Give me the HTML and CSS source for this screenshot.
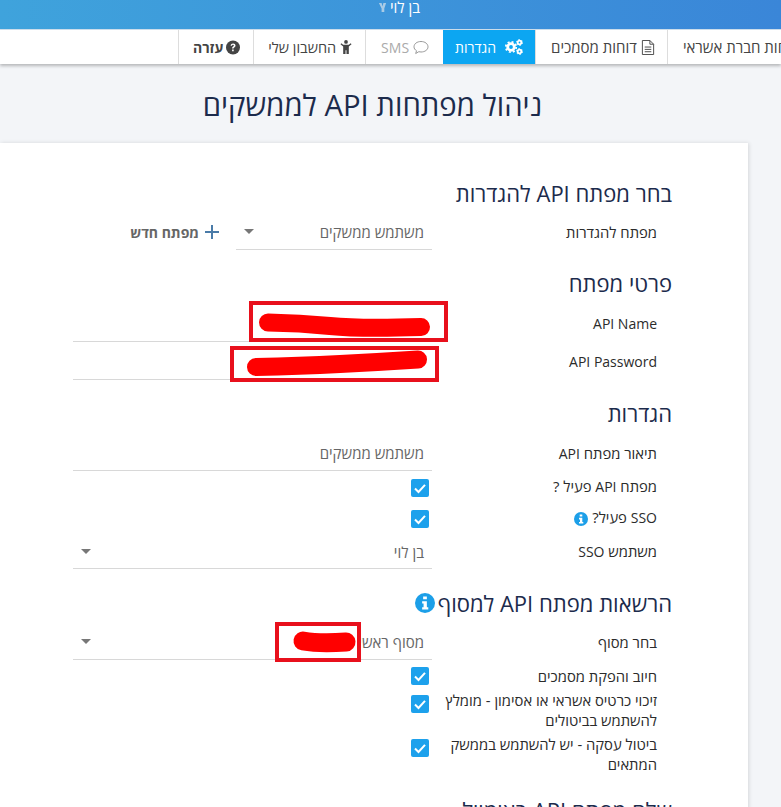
FILE: index.html
```html
<!DOCTYPE html>
<html lang="he">
<head>
<meta charset="utf-8">
<title>ניהול מפתחות API לממשקים</title>
<link rel="stylesheet" href="styles.css">
</head>
<body>
<header class="topbar"><span class="user"><svg class="user-icon" viewBox="0 0 10 12"><path d="M1 1h3l1 4 1-4h3L7 7v4H4V7z"/></svg>בן לוי</span></header>
<nav class="nav">
  <a class="nav-item nav-help"><svg class="ico" viewBox="0 0 14 14"><circle cx="7" cy="7" r="7" fill="#444"/><path d="M4.6 5.2C4.8 3.8 5.8 3 7.1 3c1.400 0 2.400.9 2.400 2.100 0 1-.6 1.500-1.200 1.900-.5.3-.7.600-.7 1.100H6.100c0-1 .3-1.500 1-2 .5-.3.8-.6.8-1 0-.5-.4-.8-.9-.8-.6 0-.9.3-1.100 1zM6.100 9h1.600v1.700H6.100z" fill="#fff"/></svg>עזרה</a>
  <a class="nav-item nav-account"><svg class="ico ico-male" viewBox="0 0 12 16"><circle cx="6" cy="2" r="2" fill="#444"/><path d="M1 3.500 3 5h6l2-1.500.9 1L9 7v8H6.500v-4h-1v4H3V7L.1 4.500z" fill="#444"/></svg>החשבון שלי</a>
  <a class="nav-item nav-muted"><svg class="ico ico-wide" viewBox="0 0 16 14"><path d="M8 1c3.900 0 7 2.300 7 5.300s-3.100 5.200-7 5.200c-.8 0-1.500-.1-2.200-.3L2.700 13l.8-2.800C1.900 9.300 1 7.900 1 6.300 1 3.300 4.100 1 8 1z" fill="none" stroke="#999" stroke-width="1"/></svg><span class="lat">SMS</span></a>
  <a class="nav-item nav-active"><svg class="ico ico-gears" viewBox="0 0 18 16"><circle cx="6" cy="8" r="3.300" fill="none" stroke="#fff" stroke-width="2.800"/><circle cx="6" cy="8" r="5.200" fill="none" stroke="#fff" stroke-width="1.800" stroke-dasharray="2 2.080"/><circle cx="14.500" cy="3.500" r="1.800" fill="none" stroke="#fff" stroke-width="1.800"/><circle cx="14.500" cy="3.500" r="3" fill="none" stroke="#fff" stroke-width="1" stroke-dasharray="1.500 1.640"/><circle cx="14.500" cy="12.500" r="1.800" fill="none" stroke="#fff" stroke-width="1.800"/><circle cx="14.500" cy="12.500" r="3" fill="none" stroke="#fff" stroke-width="1" stroke-dasharray="1.500 1.640"/></svg>הגדרות</a>
  <a class="nav-item nav-docs"><svg class="ico" viewBox="0 0 13 16"><path d="M.5.500h8l4 4v11H.5zM8.500.5v4h4M3 7.500h7M3 10h7M3 12.500h7" fill="none" stroke="#444"/></svg>דוחות מסמכים</a>
  <a class="nav-item nav-last">דוחות חברת אשראי</a>
</nav>
<h1 class="title">ניהול מפתחות API לממשקים</h1>
<main class="card">
  <h2 class="heading">בחר מפתח API להגדרות</h2>
  <div class="row">
    <label class="label">מפתח להגדרות</label>
    <div class="field-group">
      <div class="field field-short"><span>משתמש ממשקים</span><i class="caret"></i></div>
      <a class="new-key"><svg class="plus" viewBox="0 0 14 14"><path d="M7 0v14M0 7h14" stroke="#4a7ba8" stroke-width="2"/></svg>מפתח חדש</a>
    </div>
  </div>

  <h2 class="heading heading-details">פרטי מפתח</h2>
  <div class="row"><label class="label lat">API Name</label><div class="field"></div></div>
  <div class="row row-near"><label class="label lat">API Password</label><div class="field"></div></div>

  <h2 class="heading heading-settings">הגדרות</h2>
  <div class="row"><label class="label">תיאור מפתח <span class="lat">API</span></label><div class="field"><span>משתמש ממשקים</span></div></div>
  <div class="check-row check-first"><label class="label">מפתח <span class="lat">API</span> פעיל ?</label><div class="check"><svg viewBox="0 0 18 18"><path d="M4 9.500 7.500 13 14 5.800" fill="none" stroke="#fff" stroke-width="2"/></svg></div></div>
  <div class="check-row"><label class="label"><span class="lat">SSO</span> פעיל? <svg class="info info-small" viewBox="0 0 14 14"><circle cx="7" cy="7" r="7" fill="#1c9fe8"/><path d="M5.700 2.400h2.600v2H5.700zM5 5.700h3.300v4.200h1v1.700H5V9.900h1V7.400H5z" fill="#fff"/></svg></label><div class="check"><svg viewBox="0 0 18 18"><path d="M4 9.500 7.500 13 14 5.800" fill="none" stroke="#fff" stroke-width="2"/></svg></div></div>
  <div class="row row-tight"><label class="label">משתמש <span class="lat">SSO</span></label><div class="field"><span>בן לוי</span><i class="caret"></i></div></div>

  <h2 class="heading">הרשאות מפתח API למסוף <svg class="info" viewBox="0 0 14 14"><circle cx="7" cy="7" r="7" fill="#1c9fe8"/><path d="M5.700 2.400h2.600v2H5.700zM5 5.700h3.300v4.200h1v1.700H5V9.900h1V7.400H5z" fill="#fff"/></svg></h2>
  <div class="row"><label class="label">בחר מסוף</label><div class="field"><span>מסוף ראשי</span><i class="caret"></i></div></div>
  <div class="perm perm-first"><label class="label">חיוב והפקת מסמכים</label><div class="check"><svg viewBox="0 0 18 18"><path d="M4 9.500 7.500 13 14 5.800" fill="none" stroke="#fff" stroke-width="2"/></svg></div></div>
  <div class="perm"><label class="label">זיכוי כרטיס אשראי או אסימון - מומלץ להשתמש בביטולים</label><div class="check"><svg viewBox="0 0 18 18"><path d="M4 9.500 7.500 13 14 5.800" fill="none" stroke="#fff" stroke-width="2"/></svg></div></div>
  <div class="perm"><label class="label">ביטול עסקה - יש להשתמש בממשק המתאים</label><div class="check"><svg viewBox="0 0 18 18"><path d="M4 9.500 7.500 13 14 5.800" fill="none" stroke="#fff" stroke-width="2"/></svg></div></div>

  <h2 class="heading heading-last">שלח מפתח API באימייל</h2>
</main>
<svg class="redactions" viewBox="0 0 781 807">
  <g fill="none" stroke="#e8101c" stroke-width="4">
    <rect x="251" y="303" width="195" height="37"/>
    <rect x="232" y="348" width="205" height="32"/>
    <rect x="277" y="624" width="82" height="36"/>
  </g>
  <g fill="none" stroke="#ff0000" stroke-width="18" stroke-linecap="round" stroke-linejoin="round">
    <path d="M268 322.500 Q300 323 330 326 T421 327"/>
    <path d="M256 367 Q300 366 340 364 T418 359.500"/>
    <path d="M303 641 Q320 644 346 642" stroke-width="19"/>
  </g>
</svg>
</body>
</html>
```
FILE: styles.css
```css
* { box-sizing: border-box; }
html, body { margin: 0; height: 807px; overflow: hidden; }
body {
  position: relative;
  background: #f3f5f8;
  font-family: "Open Sans", "Noto Sans", "DejaVu Sans", sans-serif;
  font-size: 14.8px;
  color: #2b2b2b;
}
.lat { font-size: 14px; }
.topbar {
  height: 30px;
  background: linear-gradient(90deg, #3fa3dc, #3a86d8);
  border-bottom: 1px solid #cfe0ee;
  display: flex;
  justify-content: center;
  direction: rtl;
  overflow: hidden;
}
.user {
  color: #fff;
  font-size: 15px;
  line-height: 14px;
  display: flex;
  gap: 3px;
  align-items: center;
  height: 14px;
  margin-left: 17px;
}
.user-icon { width: 9px; height: 11px; fill: #a9cbe6; order: 1; }
.nav {
  display: flex;
  height: 34px;
  background: #fff;
  padding-left: 178px;
  overflow: hidden;
  box-shadow: 0 2px 3px rgba(0, 0, 0, .25);
  position: relative;
  font-size: 15px;
}
.nav-item {
  direction: rtl;
  flex: none;
  display: flex;
  align-items: center;
  gap: 4px;
  padding: 0 14px;
  border-left: 1px solid #ddd;
  color: #444;
  white-space: nowrap;
}
.nav-help { font-weight: 700; font-size: 14px; padding-right: 13px; gap: 3px; }
.nav-account { font-size: 14.500px; padding-right: 13px; }
.nav-muted { color: #aaa; padding-left: 15px; }
.nav-active { background: #0ca6f2; color: #fff; border-left: 0; width: 92px; padding: 0 12px 0 0; gap: 9px; font-size: 14px; }
.nav-docs { padding: 0 12px 0 15px; }
.nav-last { padding-left: 15px; }
.ico { width: 14px; height: 15px; flex: none; }
.ico-wide { width: 16px; }
.ico-male { width: 12px; }
.ico-gears { width: 18px; height: 16px; }
.title {
  margin: 21px 0 0;
  height: 40px;
  width: 745px;
  text-align: center;
  direction: rtl;
  font-size: 29.300px;
  line-height: 40px;
  font-weight: 400;
  color: #1c2b4c;
}
.card {
  direction: rtl;
  width: 748px;
  height: 680px;
  margin-top: 18px;
  padding: 35px 76px 0 73px;
  background: #fff;
  box-shadow: 1px 0 4px rgba(0, 0, 0, .12);
}
.heading {
  margin: 19px 0 6px;
  height: 30px;
  font-size: 22px;
  line-height: 30px;
  font-weight: 400;
  color: #1c2b4c;
  display: flex;
  align-items: center;
  gap: 3px;
}
.heading:first-child { margin-top: 0; }
.heading-details { margin: 18px 0 8px; }
.heading-settings { margin: 18px 0 7px; }
.heading-last { margin-top: 21px; }
.row, .check-row, .perm {
  display: grid;
  grid-template-columns: 240px 359px;
  align-items: center;
}
.row-near { margin-top: 2px; }
.row-tight .field { height: 34px; }
.row-tight .label { margin-top: -1px; }
.label { padding-right: 15px; line-height: 20px; }
.field {
  height: 36px;
  border-bottom: 1px solid #d8d8d8;
  padding: 0 8px;
  font-size: 15px;
  color: #666;
  display: flex;
  align-items: center;
  justify-content: space-between;
}
.field-group { display: flex; align-items: center; }
.field-short { width: 196px; flex: none; }
.caret {
  width: 0;
  height: 0;
  margin-left: 0;
  border: 5px solid transparent;
  border-top: 5px solid #777;
  border-bottom: 0;
}
.new-key {
  margin-right: 17px;
  display: flex;
  align-items: center;
  gap: 6px;
  font-size: 14px;
  font-weight: 700;
  color: #666;
}
.plus { width: 14px; height: 14px; }
.check-row { height: 31px; align-items: start; padding-top: 6px; }
.check-row .label { margin-top: -3px; }
.check-first { margin-top: 2px; }
.check {
  width: 18px;
  height: 18px;
  margin-right: 3px;
  border-radius: 2px;
  background: #1da1ec;
  display: flex;
}
.perm { margin-top: 4px; align-items: start; }
.perm .label { padding-right: 15px; width: 240px; }
.perm .check { margin-top: 5px; }
.perm-first { margin: 6px 0 1px; }
.perm-first .check { margin-top: 1px; }
.info { width: 20px; height: 20px; vertical-align: middle; }
.info-small { width: 14px; height: 14px; }
.redactions {
  position: absolute;
  top: 0;
  left: 0;
  width: 781px;
  height: 807px;
  pointer-events: none;
}
```
